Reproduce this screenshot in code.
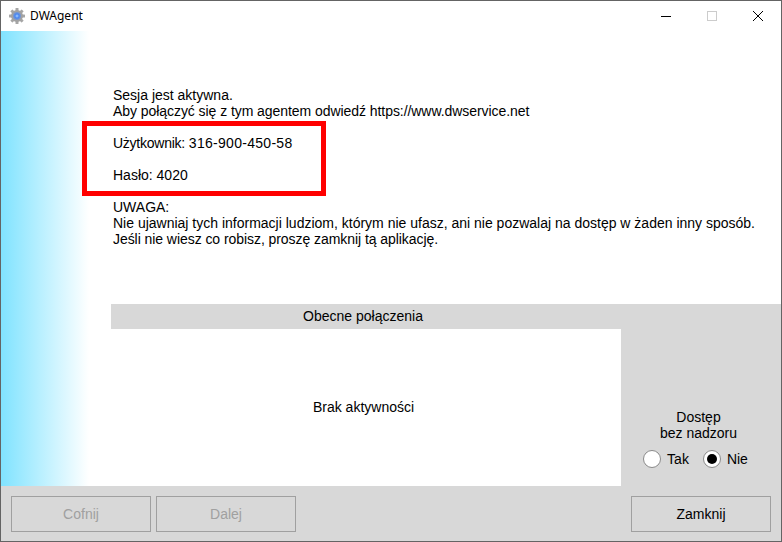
<div class="window">
  <header class="titlebar">
    <svg class="logo" viewBox="0 0 16 16" width="16" height="16" aria-hidden="true">
      <defs>
        <radialGradient id="core" cx="50%" cy="50%" r="50%">
          <stop offset="0%" stop-color="#a8d4ff" />
          <stop offset="50%" stop-color="#4a86f2" />
          <stop offset="100%" stop-color="#7f9ac8" />
        </radialGradient>
      </defs>
      <g fill="#a6a6a6">
        <rect x="6.5" y="0" width="3" height="16" rx="0.5" />
        <rect x="0" y="6.5" width="16" height="3" rx="0.5" />
        <rect x="6.5" y="0" width="3" height="16" rx="0.5" transform="rotate(45 8 8)" />
        <rect x="6.5" y="0" width="3" height="16" rx="0.5" transform="rotate(-45 8 8)" />
      </g>
      <circle cx="8" cy="8" r="6" fill="#a2a2a2" />
      <circle cx="8" cy="8" r="4" fill="url(#core)" />
    </svg>
    <span class="title">DWAgent</span>
    <div class="controls">
      <svg class="ctl" width="12" height="12" viewBox="0 0 12 12" aria-hidden="true"><path d="M1 6.5h10" stroke="#000" fill="none" /></svg>
      <svg class="ctl" width="12" height="12" viewBox="0 0 12 12" aria-hidden="true"><rect x="1.5" y="1.5" width="9" height="9" stroke="#ccc" fill="none" /></svg>
      <svg class="ctl" width="12" height="12" viewBox="0 0 12 12" aria-hidden="true"><path d="M1 1l10 10M11 1L1 11" stroke="#000" fill="none" /></svg>
    </div>
  </header>

  <div class="body">
    <div class="side"></div>
    <main class="main">
      <section class="message">
        <p>Sesja jest aktywna.<br /><span class="tight">Aby połączyć się z tym agentem odwiedź https://www.dwservice.net</span></p>
        <p><span class="label">Użytkownik:</span> <span class="code">316-900-450-58</span></p>
        <p>Hasło: 4020</p>
        <p>UWAGA:<br />Nie ujawniaj tych informacji ludziom, którym nie ufasz, ani nie pozwalaj na dostęp w żaden inny sposób.<br /><span class="tight">Jeśli nie wiesz co robisz, proszę zamknij tą aplikację.</span></p>
        <div class="highlight"></div>
      </section>
      <section class="connections">
        <div class="conn-head"><span>Obecne połączenia</span></div>
        <div class="conn-body">
          <div class="conn-list">Brak aktywności</div>
          <aside class="unattended">
            <div class="unattended-label">Dostęp<br />bez nadzoru</div>
            <div class="radios">
              <label class="radio"><input type="radio" name="unattended" /> <span>Tak</span></label>
              <label class="radio"><input type="radio" name="unattended" checked /> <span>Nie</span></label>
            </div>
          </aside>
        </div>
      </section>
    </main>
  </div>

  <footer class="footer">
    <div class="nav">
      <button disabled>Cofnij</button>
      <button disabled>Dalej</button>
    </div>
    <button>Zamknij</button>
  </footer>
</div>

<style>
  :global(body) {
    margin: 0;
    background: #fff;
  }
  .window {
    box-sizing: border-box;
    width: 782px;
    height: 542px;
    border: 1px solid #646464;
    display: flex;
    flex-direction: column;
    font-family: "Liberation Sans", Arial, sans-serif;
    font-size: 14px;
    line-height: 16px;
    color: #000;
    background: #fff;
    overflow: hidden;
  }
  .titlebar {
    height: 30px;
    flex: none;
    display: flex;
    align-items: center;
    padding-left: 8px;
  }
  .logo {
    margin-right: 5px;
  }
  .title {
    font-family: "Noto Sans", "Liberation Sans", sans-serif;
    font-size: 12px;
    color: #000;
  }
  .controls {
    margin-left: auto;
    display: flex;
    height: 100%;
    align-items: center;
    gap: 34px;
    padding-right: 17px;
  }
  .body {
    flex: 1;
    display: flex;
    min-height: 0;
  }
  .side {
    width: 88px;
    flex: none;
    background: linear-gradient(to right, #80e3ff, #fff);
  }
  .main {
    flex: 1;
    display: flex;
    flex-direction: column;
    min-width: 0;
  }
  .message {
    position: relative;
    height: 273px;
    flex: none;
    box-sizing: border-box;
    padding: 56px 0 0 24px;
  }
  .message p {
    margin: 0 0 16px;
  }
  .tight {
    letter-spacing: -0.06px;
  }
  .label {
    letter-spacing: -0.25px;
  }
  .code {
    letter-spacing: 0.29px;
  }
  .highlight {
    position: absolute;
    left: -7px;
    top: 90px;
    width: 244px;
    height: 75px;
    box-sizing: border-box;
    border: 5px solid #f00;
    pointer-events: none;
  }
  .connections {
    flex: 1;
    margin-left: 22px;
    display: flex;
    flex-direction: column;
    min-height: 0;
  }
  .conn-head {
    height: 25px;
    flex: none;
    box-sizing: border-box;
    padding-bottom: 1px;
    background: #d8d8d8;
    display: flex;
    align-items: center;
  }
  .conn-head span {
    width: 504px;
    text-align: center;
  }
  .conn-body {
    flex: 1;
    display: flex;
    min-height: 0;
  }
  .conn-list {
    width: 505px;
    padding-right: 5px;
    display: flex;
    align-items: center;
    justify-content: center;
    padding-bottom: 1px;
  }
  .unattended {
    flex: 1;
    background: #d8d8d8;
    display: flex;
    flex-direction: column;
    justify-content: flex-end;
    align-items: center;
    padding: 0 5px 18px 0;
  }
  .unattended-label {
    text-align: center;
    margin-bottom: 9px;
  }
  .radios {
    display: flex;
    gap: 14px;
    margin-right: 6px;
  }
  .radio {
    display: flex;
    align-items: center;
    gap: 6px;
  }
  .radio input {
    appearance: none;
    margin: 0;
    width: 18px;
    height: 18px;
    border-radius: 50%;
    border: 1px solid #8a8a8a;
    background: #fff;
    box-sizing: border-box;
    display: grid;
    place-items: center;
  }
  .radio input:checked::before {
    content: "";
    width: 10px;
    height: 10px;
    border-radius: 50%;
    background: #000;
  }
  .footer {
    height: 55px;
    flex: none;
    box-sizing: border-box;
    background: #d8d8d8;
    display: flex;
    justify-content: space-between;
    padding: 10px 10px 9px;
  }
  .nav {
    display: flex;
    gap: 5px;
  }
  button {
    width: 140px;
    height: 36px;
    box-sizing: border-box;
    background: #d8d8d8;
    border: 1px solid #a0a0a0;
    font: inherit;
    color: #000;
    padding: 0;
  }
  button:disabled {
    color: #a0a0a0;
  }
</style>
